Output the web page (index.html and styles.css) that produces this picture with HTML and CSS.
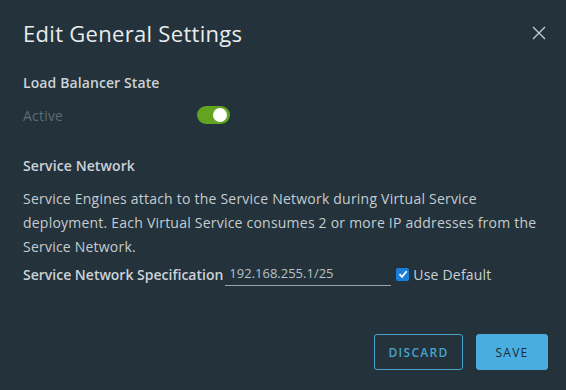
FILE: index.html
```html
<!DOCTYPE html>
<html lang="en">
  <head>
    <meta charset="UTF-8">
    <meta name="viewport" content="width=device-width, initial-scale=1.0">
    <title>Edit General Settings</title>
    <link rel="stylesheet" href="styles.css">
  </head>
  <body>
    <div class="modal">
      <div class="modal-header">
        <h1 class="modal-title">Edit General Settings</h1>
        <button class="close" aria-label="Close">
          <svg width="14" height="14" viewBox="0 0 14 14">
            <path d="M1 1 L13 13 M13 1 L1 13" stroke="#c8d0d4" stroke-width="1.3" fill="none"/>
          </svg>
        </button>
      </div>

      <div class="modal-body">
        <h2 class="section-title">Load Balancer State</h2>
        <div class="toggle-row">
          <span class="toggle-label">Active</span>
          <span class="toggle on"><span class="knob"></span></span>
        </div>

        <h2 class="section-title">Service Network</h2>
        <p class="description">Service Engines attach to the Service Network during Virtual Service deployment. Each Virtual Service consumes 2 or more IP addresses from the Service Network.</p>

        <div class="spec-row">
          <label class="spec-label">Service Network Specification</label>
          <input class="spec-input" type="text" value="192.168.255.1/25">
          <label class="checkbox">
            <span class="box">
              <svg width="10" height="10" viewBox="0 0 10 10">
                <path d="M1.5 5.2 L4 7.8 L8.6 2.2" stroke="#fff" stroke-width="1.8" fill="none"/>
              </svg>
            </span>
            Use Default
          </label>
        </div>
      </div>

      <div class="modal-footer">
        <button class="btn btn-outline">Discard</button>
        <button class="btn btn-primary">Save</button>
      </div>
    </div>
  </body>
</html>
```

FILE: styles.css
```css
body {
  margin: 0;
  background-color: #23323b;
  font-family: "Open Sans", "Noto Sans", sans-serif;
  color: #c9d0d4;
}

.modal {
  width: 566px;
  height: 390px;
  box-sizing: border-box;
  padding: 0 18px 0 23px;
  display: flex;
  flex-direction: column;
}

.modal-header {
  display: flex;
  align-items: center;
  justify-content: space-between;
  padding-top: 19px;
}

.modal-title {
  margin: 0;
  font-size: 22px;
  font-weight: 400;
  letter-spacing: 0.3px;
  color: #e8ecee;
  line-height: 28px;
}

.close {
  background: none;
  border: none;
  padding: 0;
  margin-right: 2px;
  display: flex;
  cursor: pointer;
}

.modal-body {
  padding-top: 26px;
}

.section-title {
  margin: 0;
  font-size: 14px;
  font-weight: 600;
  letter-spacing: 0.1px;
  line-height: 20px;
  color: #ccd3d7;
}

.toggle-row {
  display: flex;
  align-items: center;
  height: 24px;
  margin: 10px 0 29px;
}

.toggle-label {
  width: 174px;
  font-size: 14px;
  letter-spacing: 0.2px;
  color: #5d6c75;
}

.toggle {
  width: 33px;
  height: 18px;
  border-radius: 9px;
  background-color: #62a420;
  position: relative;
}

.toggle .knob {
  position: absolute;
  top: 2px;
  right: 3px;
  width: 14px;
  height: 14px;
  border-radius: 50%;
  background-color: #fff;
}

.description {
  margin: 11px 0 0;
  font-size: 14px;
  letter-spacing: 0.22px;
  line-height: 24px;
  color: #c5ccd0;
}

.spec-row {
  display: flex;
  align-items: center;
  margin-top: 3px;
}

.spec-label {
  font-size: 14px;
  font-weight: 600;
  color: #ccd3d7;
}

.spec-input {
  width: 166px;
  box-sizing: border-box;
  margin-left: 2px;
  background: transparent;
  border: none;
  border-bottom: 1px solid #9aa5ab;
  color: #b9c1c6;
  font-family: inherit;
  font-size: 13px;
  padding: 2px 4px 3px;
  outline: none;
}

.checkbox {
  display: flex;
  align-items: center;
  gap: 4px;
  margin-left: 5px;
  font-size: 14px;
  letter-spacing: 0.2px;
  color: #c9d0d4;
}

.box {
  width: 13px;
  height: 13px;
  border-radius: 2px;
  background-color: #1a7fd8;
  display: flex;
  align-items: center;
  justify-content: center;
}

.modal-footer {
  margin-top: auto;
  margin-bottom: 20px;
  display: flex;
  justify-content: flex-end;
  gap: 13px;
}

.btn {
  height: 36px;
  border-radius: 3px;
  font-family: inherit;
  font-size: 12px;
  font-weight: 600;
  letter-spacing: 1.3px;
  text-transform: uppercase;
  cursor: pointer;
}

.btn-outline {
  width: 89px;
  background: transparent;
  border: 1px solid #4aa3cc;
  color: #4aa3cc;
}

.btn-primary {
  width: 72px;
  background-color: #49aedf;
  border: 1px solid #49aedf;
  color: #1c2a33;
  font-weight: 500;
}
```
